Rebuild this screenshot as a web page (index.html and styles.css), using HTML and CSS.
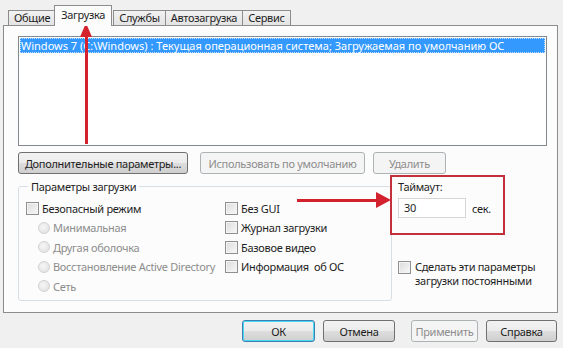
FILE: index.html
```html
<!DOCTYPE html>
<html>
<head>
<meta charset="utf-8">
<title>Конфигурация системы</title>
<link rel="stylesheet" href="styles.css">
</head>
<body>

<div class="window">
  <div class="tabs">
    <div class="tab">Общие</div>
    <div class="tab active">Загрузка</div>
    <div class="tab">Службы</div>
    <div class="tab">Автозагрузка</div>
    <div class="tab">Сервис</div>
  </div>

  <div class="panel">
    <div class="os-list">
      <div class="os-item">Windows 7 (C:\Windows) : Текущая операционная система; Загружаемая по умолчанию ОС</div>
    </div>

    <div class="btn-row">
      <button class="btn btn-wide">Дополнительные параметры...</button>
      <button class="btn btn-default" disabled>Использовать по умолчанию</button>
      <button class="btn btn-del" disabled>Удалить</button>
    </div>

    <div class="lower">
      <fieldset class="group">
        <legend>Параметры загрузки</legend>
        <div class="group-cols">
          <div class="col col-safe">
            <label class="opt"><span class="chk"></span>Безопасный режим</label>
            <label class="opt sub off"><span class="radio"></span>Минимальная</label>
            <label class="opt sub off"><span class="radio"></span>Другая оболочка</label>
            <label class="opt sub off"><span class="radio"></span>Восстановление Active Directory</label>
            <label class="opt sub off"><span class="radio"></span>Сеть</label>
          </div>
          <div class="col">
            <label class="opt"><span class="chk"></span>Без GUI</label>
            <label class="opt"><span class="chk"></span>Журнал загрузки</label>
            <label class="opt"><span class="chk"></span>Базовое видео</label>
            <label class="opt"><span class="chk"></span>Информация&nbsp; об ОС</label>
          </div>
        </div>
      </fieldset>

      <div class="side">
        <div class="timeout">
          <div class="timeout-label">Таймаут:</div>
          <div class="timeout-row">
            <span class="field">30</span>
            <span>сек.</span>
          </div>
        </div>
        <label class="opt persist"><span class="chk"></span><span>Сделать эти параметры<br>загрузки постоянными</span></label>
      </div>
    </div>
  </div>

  <div class="footer">
    <button class="btn btn-ok">ОК</button>
    <button class="btn btn-cancel">Отмена</button>
    <button class="btn btn-apply" disabled>Применить</button>
    <button class="btn btn-help">Справка</button>
  </div>

  <!-- red annotation arrows -->
  <div class="arrow-up"></div>
  <div class="arrow-right"></div>
</div>

</body>
</html>
```

FILE: styles.css
```css
body {
  margin: 0;
  background-color: #f0f0f0;
  font-family: "Noto Sans", "DejaVu Sans", sans-serif;
  font-size: 11px;
  letter-spacing: -0.3px;
  color: #1e1e1e;
}

.window {
  position: relative;
  width: 563px;
  height: 348px;
  overflow: hidden;
}

.tabs {
  display: flex;
  align-items: flex-end;
  height: 25px;
  padding-left: 8px;
}

.tab {
  height: 14px;
  line-height: 14px;
  padding: 0 5px;
  border: 1px solid #8c8c8c;
  border-bottom: none;
  margin-right: -1px;
  background: linear-gradient(#f2f2f2, #e3e3e3);
}

.tab.active {
  position: relative;
  height: 20px;
  line-height: 18px;
  padding: 0 6px;
  margin: 0 1px -1px -1px;
  background: #fcfcfc;
  z-index: 1;
}

.panel {
  box-sizing: border-box;
  width: 555px;
  height: 288px;
  margin-left: 3px;
  padding: 10px 10px 0 14px;
  border: 1px solid #8c8c8c;
  background-color: #fcfcfc;
}

.os-list {
  height: 106px;
  border: 1px solid #828790;
  background: #fff;
  padding: 1px;
}

.os-item {
  height: 15px;
  line-height: 15px;
  padding-left: 1px;
  background-color: #3399ff;
  color: #fff;
  letter-spacing: 0;
  outline: 1px dotted #c0dcff;
  outline-offset: -1px;
  white-space: nowrap;
}

.btn {
  box-sizing: border-box;
  height: 22px;
  font-family: inherit;
  font-size: 11px;
  letter-spacing: inherit;
  color: #1e1e1e;
  border: 1px solid #707070;
  border-radius: 3px;
  background: linear-gradient(#f2f2f2 0%, #ebebeb 50%, #dddddd 51%, #cfcfcf 100%);
  padding: 0;
}

.btn:disabled {
  color: #8d8d8d;
  border-color: #adb2b5;
  background: #f4f4f4;
}

.btn-row {
  display: flex;
  gap: 12px;
  margin-top: 6px;
}

.btn-wide {
  width: 170px;
}

.btn-default {
  width: 165px;
}

.btn-del {
  width: 73px;
  margin-left: -4px;
}

.lower {
  display: flex;
  margin-top: 5px;
}

.group {
  box-sizing: border-box;
  width: 374px;
  height: 122px;
  margin: 0;
  padding: 6px 7px 0 7px;
  border: 1px solid #d5dfe5;
  border-radius: 3px;
}

.group legend {
  padding: 0 3px;
  margin-left: 2px;
}

.group-cols {
  display: flex;
}

.col {
  display: flex;
  flex-direction: column;
  gap: 3px;
}

.col-safe {
  width: 199px;
}

.opt {
  display: flex;
  align-items: center;
  height: 16.5px;
  white-space: nowrap;
}

.sub {
  padding-left: 12px;
}

.off {
  color: #8d8d8d;
}

.chk {
  box-sizing: border-box;
  width: 13px;
  height: 13px;
  margin-right: 3px;
  border: 1px solid #8f8f8f;
  background: linear-gradient(135deg, #dcdcdc, #f8f8f8);
  box-shadow: inset 0 0 0 1px #f4f4f4;
}

.radio {
  box-sizing: border-box;
  width: 12px;
  height: 12px;
  margin-right: 3px;
  border-radius: 50%;
  border: 1px solid #d2d2d2;
  background: radial-gradient(circle at 40% 40%, #f6f6f6, #dedede);
}

.side {
  display: flex;
  flex-direction: column;
  margin-left: -2px;
}

.timeout {
  box-sizing: border-box;
  width: 115px;
  height: 60px;
  margin-top: -4px;
  padding: 3px 0 0 6px;
  border: 2px solid #c3303c;
}

.timeout-label {
  height: 14px;
  line-height: 14px;
}

.timeout-row {
  display: flex;
  align-items: center;
  gap: 6px;
  margin-top: 4px;
}

.field {
  box-sizing: border-box;
  width: 68px;
  height: 20px;
  line-height: 18px;
  padding-left: 5px;
  border: 1px solid #d6d6d6;
  background: #fff;
}

.persist {
  align-items: flex-start;
  height: auto;
  margin: 25px 0 0 8px;
  line-height: 14px;
}

.persist .chk {
  margin-top: 1px;
  margin-right: 4px;
}

.footer {
  display: flex;
  justify-content: flex-end;
  gap: 8px;
  padding: 7px 6px 0 0;
}

.btn-ok {
  width: 73px;
  border-color: #3c7fb1;
  box-shadow: inset 0 0 0 1px #48d9f4;
}

.btn-cancel {
  width: 72px;
}

.btn-apply {
  width: 67px;
  margin-left: 8px;
}

.btn-help {
  width: 71px;
}

.arrow-up {
  position: absolute;
  left: 85px;
  top: 36px;
  width: 3px;
  height: 108px;
  background: #d3222d;
}

.arrow-up::before {
  content: "";
  position: absolute;
  left: -5px;
  top: -13px;
  border-left: 6.5px solid transparent;
  border-right: 6.5px solid transparent;
  border-bottom: 14px solid #d3222d;
}

.arrow-right {
  position: absolute;
  left: 297px;
  top: 199px;
  width: 80px;
  height: 3px;
  background: #d3222d;
}

.arrow-right::after {
  content: "";
  position: absolute;
  right: -14px;
  top: -7px;
  border-top: 8px solid transparent;
  border-bottom: 8px solid transparent;
  border-left: 15px solid #d3222d;
}
```
